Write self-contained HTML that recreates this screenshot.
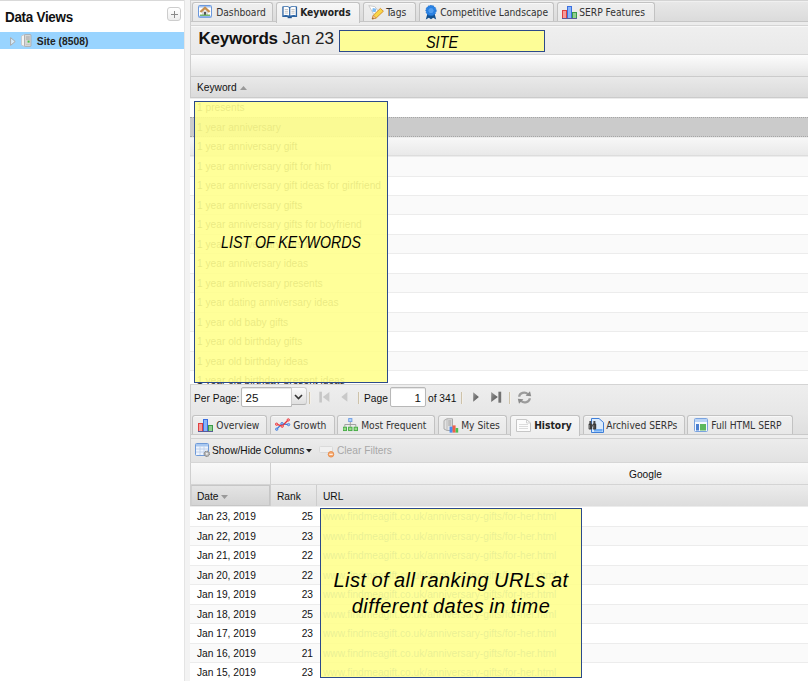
<!DOCTYPE html>
<html><head><meta charset="utf-8"><title>Keywords</title>
<style>
*{box-sizing:border-box;margin:0;padding:0}
html,body{width:808px;height:681px;overflow:hidden;background:#fff;font-family:"Liberation Sans",sans-serif;font-size:10.2px;color:#111}
div,span,svg{position:absolute}
#side{left:0;top:0;width:184px;height:681px;background:#fff;box-shadow:inset 0 1px 0 #d9d9d9}
#dv{left:5px;top:8px;font-size:14.6px;transform:scaleX(0.92);transform-origin:left center;font-weight:bold;letter-spacing:-0.3px;color:#111;line-height:18px;white-space:nowrap}
#plus{left:167px;top:7px;width:14px;height:14px;border:1px solid #cdcdcd;border-radius:3px;background:linear-gradient(#ffffff,#ededed)}
#plus:before{content:"";position:absolute;left:3px;top:6px;width:7px;height:1px;background:#8a8a8a}
#plus:after{content:"";position:absolute;left:6px;top:3px;width:1px;height:7px;background:#8a8a8a}
#selrow{left:0;top:32px;width:184px;height:17px;background:#99d4ff}
#selrow span{left:36.8px;top:2.7px;font-weight:bold;font-size:10.3px;line-height:13px;color:#222;white-space:nowrap}
#split{left:184px;top:0;width:6px;height:681px;background:#f3f3f3;border-left:1px solid #e4e4e4}
#main{left:190px;top:0;width:618px;height:681px;background:#fff}
.strip{left:190px;width:618px;background:linear-gradient(#e9e9e9,#dbdbdb);border-left:1px solid #cfcfcf}
.tab{height:19px;border:1px solid #c2c2c2;border-bottom:none;border-radius:3px 3px 0 0;background:linear-gradient(#efefef,#e8e8e8);box-shadow:inset 0 1px 0 #f8f8f8}
.tab.on{background:linear-gradient(#f6f6f6,#eeeeee);height:21px}
.tl{font-family:"DejaVu Sans Condensed","Liberation Sans",sans-serif;font-size:10.2px;line-height:13px;color:#333;white-space:nowrap}
.tl.b{font-weight:bold;color:#222}
.t{white-space:nowrap;line-height:13px}
.row{left:190px;width:618px;height:20px;border-top:1px solid #ececec}
.row.alt{background:#fafafa}
.ft{color:#222;white-space:nowrap;line-height:13px;font-size:10.2px}
.ybox{background:rgba(255,255,142,0.9);border:1px solid #2c4a8a}
.yt{font-style:italic;color:#000;white-space:nowrap;text-align:center}
.sep{width:2px;height:12px;background:linear-gradient(90deg,#cdc2aa 50%,#f3f0ea 50%);top:391.5px}
</style></head><body>
<div id="side"><div id="dv">Data Views</div><div id="plus"></div>
<div id="selrow"><svg style="left:10px;top:5px" width="6" height="9" viewBox="0 0 6 9"><path d="M0.6 0.6 L5.2 4.5 L0.6 8.4 Z" fill="#d6ecfc" stroke="#a9a9a9" stroke-width="1"/></svg>
<svg style="left:21px;top:2px" width="11" height="13" viewBox="0 0 11 13"><path d="M0.5 2 L3.5 0.5 V12.5 L0.5 11 Z" fill="#f4f4f4" stroke="#c4c4c4" stroke-width="0.8"/><rect x="3.5" y="0.5" width="6.5" height="12" rx="0.8" fill="#d6d6d6" stroke="#a8a8a8" stroke-width="0.8"/><path d="M5 3H8.8 M5 5H8.8" stroke="#999" stroke-width="0.8"/><rect x="6.6" y="6.6" width="2" height="2" fill="#48c048"/><path d="M5 10.5H8.8" stroke="#bbb" stroke-width="0.6"/></svg>
<span>Site (8508)</span></div></div>
<div id="split"></div><div id="main"></div>
<div class="strip" style="top:0;height:22px;border-bottom:1px solid #c6c6c6;box-shadow:inset 0 1px 0 #d4d4d4,inset 0 2px 0 #f0f0f0"></div>
<div style="left:190px;top:22px;width:618px;height:3px;background:#ececec;border-left:1px solid #cfcfcf"></div>
<div class="tab" style="left:192px;top:2px;width:81px"></div>
<span class="tl" style="left:216.2px;top:6px">Dashboard</span>
<svg style="left:198px;top:5px" width="14" height="13" viewBox="0 0 14 13"><rect x="0.5" y="0.5" width="13" height="12" rx="1" fill="#fff" stroke="#6b98dc"/><rect x="1" y="1" width="12" height="1.5" fill="#a5c3f0"/><rect x="1" y="10.7" width="12" height="1.8" fill="#8fb3ea"/><rect x="4" y="5.6" width="6" height="4.6" fill="#d8d8d8"/><path d="M2.4 7 L7 2.9 L11.6 7" fill="none" stroke="#c69050" stroke-width="2.3"/><rect x="6" y="7" width="2" height="3" fill="#555"/><rect x="2" y="9.6" width="10" height="1.2" fill="#5aaa4a"/></svg>
<div class="tab on" style="left:276px;top:2px;width:84px"></div>
<span class="tl b" style="left:300.2px;top:6px">Keywords</span>
<svg style="left:282px;top:5px" width="16" height="14" viewBox="0 0 16 14"><path d="M0.3 1.6 C2.5 0.6 5.5 0.6 7.7 2 C9.9 0.6 12.9 0.6 15.1 1.6 V12 H0.3 Z" fill="#2c64a4"/><path d="M1.6 2.2 C3.5 1.5 5.5 1.6 7.1 2.8 V10.6 C5.5 9.8 3.5 9.8 1.6 10.4 Z" fill="#fdfdfd"/><path d="M13.8 2.2 C11.9 1.5 9.9 1.6 8.3 2.8 V10.6 C9.9 9.8 11.9 9.8 13.8 10.4 Z" fill="#fdfdfd"/><path d="M2.8 4.5H6 M2.8 6.3H6 M2.8 8.1H6 M9.4 4.5H12.6 M9.4 6.3H12.6 M9.4 8.1H12.6" stroke="#b8b8b8" stroke-width="0.8"/><rect x="5.6" y="12" width="4.2" height="1.2" fill="#24568f"/></svg>
<div class="tab" style="left:363px;top:2px;width:53px"></div>
<span class="tl" style="left:386.2px;top:6px">Tags</span>
<svg style="left:368px;top:5px" width="16" height="15" viewBox="0 0 16 15"><path d="M0.8 0.6 L6.8 1.6 L11 7 L6 9.8 Z" fill="#ffffff" stroke="#cacaca"/><rect x="4.4" y="3.4" width="3.6" height="3.6" fill="#7fbcf4" transform="rotate(12 6.2 5.2)"/><path d="M4.2 14 L5.4 10.2 L12.4 3.4 L15.4 6.2 L8.2 13 Z" fill="#f8d648" stroke="#d8922e"/><path d="M4.2 14 L5.4 10.2 L8.2 13 Z" fill="#f3c9a0" stroke="#c8843c" stroke-width="0.6"/><path d="M4.2 14 L4.8 12.4 L5.8 13.4 Z" fill="#6a4a3a"/></svg>
<div class="tab" style="left:419px;top:2px;width:135px"></div>
<span class="tl" style="left:440.2px;top:6px">Competitive Landscape</span>
<svg style="left:424px;top:5px" width="14" height="15" viewBox="0 0 14 15"><path d="M3.6 8 L1.8 14.6 L4.8 12.8 L7 14.2 L9.2 12.8 L12.2 14.6 L10.4 8 Z" fill="#12508f"/><circle cx="7" cy="5.6" r="5.1" fill="#2a84e6" stroke="#1a6ed0" stroke-dasharray="1.6 0.9"/><circle cx="7" cy="5.6" r="3.1" fill="#4f9df0" stroke="#1f74d8" stroke-width="0.7"/></svg>
<div class="tab" style="left:557px;top:2px;width:98px"></div>
<span class="tl" style="left:579.2px;top:6px">SERP Features</span>
<svg style="left:562px;top:5px" width="16" height="14" viewBox="0 0 16 14"><rect x="0.5" y="5.5" width="4" height="8" fill="#f59a9a" stroke="#e04040"/><rect x="5.5" y="1.5" width="4" height="12" fill="#8ab4f8" stroke="#3a6fe0"/><rect x="10.5" y="7.5" width="4" height="6" fill="#8fd08f" stroke="#3a9a4a"/><path d="M0 13.5H15" stroke="#5a5a9a"/></svg>
<div style="left:190px;top:25px;width:618px;height:30px;background:linear-gradient(#efefef,#e9e9e9);border-left:1px solid #cfcfcf;border-top:1px solid #d4d4d4;border-bottom:1px solid #d4d4d4;box-shadow:inset 0 1px 0 #f8f8f8"></div>
<span class="t" style="left:198.5px;top:29px;font-size:17px;line-height:20px;font-weight:bold;letter-spacing:-0.25px;color:#111">Keywords</span>
<span class="t" style="left:282.5px;top:29px;font-size:17px;line-height:20px;color:#222;letter-spacing:0.1px">Jan 23</span>
<div class="ybox" style="left:339px;top:30px;width:206px;height:22px"></div>
<span class="yt" style="left:339px;top:33.5px;width:206px;font-size:16px;line-height:17px;transform:scaleX(0.9)">SITE</span>
<div style="left:190px;top:55px;width:618px;height:21px;background:linear-gradient(#fcfcfc,#f1f1f1 50%,#e5e5e5);border-left:1px solid #cfcfcf"></div>
<div style="left:190px;top:76px;width:618px;height:22px;background:linear-gradient(#e9e9e9,#dbdbdb);border:1px solid #cbcbcb;border-right:none"></div>
<span class="t" style="left:197px;top:81px;font-size:10.2px;color:#111">Keyword</span>
<svg style="left:240px;top:86px" width="7" height="4" viewBox="0 0 7 4"><path d="M0 4 L3.5 0 L7 4 Z" fill="#999"/></svg>
<div class="row" style="top:98px;height:19px;"></div>
<span class="ft" style="left:197px;top:101.0px">1 presents</span>
<div class="row" style="top:117px;height:20px;background:#cbcbcb;border-top:1px dotted #a6a6a6;border-bottom:1px dotted #a6a6a6;"></div>
<span class="ft" style="left:197px;top:120.5px">1 year anniversary</span>
<div class="row" style="top:137px;height:19px;background:linear-gradient(#f7f7f7,#e9e9e9);border-bottom:1px solid #dddddd;"></div>
<span class="ft" style="left:197px;top:140.0px">1 year anniversary gift</span>
<div class="row alt" style="top:156px;height:20px;"></div>
<span class="ft" style="left:197px;top:159.5px">1 year anniversary gift for him</span>
<div class="row" style="top:176px;height:19px;"></div>
<span class="ft" style="left:197px;top:179.0px">1 year anniversary gift ideas for girlfriend</span>
<div class="row alt" style="top:195px;height:19px;"></div>
<span class="ft" style="left:197px;top:198.5px">1 year anniversary gifts</span>
<div class="row" style="top:214px;height:20px;"></div>
<span class="ft" style="left:197px;top:218.0px">1 year anniversary gifts for boyfriend</span>
<div class="row alt" style="top:234px;height:19px;"></div>
<span class="ft" style="left:197px;top:237.5px">1 year anniversary gifts for her</span>
<div class="row" style="top:253px;height:20px;"></div>
<span class="ft" style="left:197px;top:257.0px">1 year anniversary ideas</span>
<div class="row alt" style="top:273px;height:19px;"></div>
<span class="ft" style="left:197px;top:276.5px">1 year anniversary presents</span>
<div class="row" style="top:292px;height:20px;"></div>
<span class="ft" style="left:197px;top:296.0px">1 year dating anniversary ideas</span>
<div class="row alt" style="top:312px;height:19px;"></div>
<span class="ft" style="left:197px;top:315.5px">1 year old baby gifts</span>
<div class="row" style="top:331px;height:20px;"></div>
<span class="ft" style="left:197px;top:335.0px">1 year old birthday gifts</span>
<div class="row alt" style="top:351px;height:19px;"></div>
<span class="ft" style="left:197px;top:354.5px">1 year old birthday ideas</span>
<div class="row" style="top:370px;height:19px;"></div>
<span class="ft" style="left:197px;top:374.0px">1 year old birthday present ideas</span>
<div class="ybox" style="left:194px;top:101px;width:194px;height:282px"></div>
<span class="yt" style="left:194px;top:234px;width:194px;font-size:16px;line-height:18px;transform:scaleX(0.885)">LIST OF KEYWORDS</span>
<div style="left:190px;top:384px;width:618px;height:29px;background:linear-gradient(#eeeeee,#e7e7e7);border-left:1px solid #cfcfcf;border-top:1px solid #d4d4d4"></div>
<span class="t" style="left:194px;top:392px;font-size:10.2px;color:#111">Per Page:</span>
<div style="left:241px;top:387px;width:51px;height:20px;background:#fff;border:1px solid #b8b8b8;border-radius:2px 0 0 2px;box-shadow:inset 0 1px 1px #e4e4e4"></div>
<span class="t" style="left:245.5px;top:390.5px;font-size:11.6px;color:#111">25</span>
<div style="left:291px;top:387px;width:16px;height:18px;background:linear-gradient(#fbfbfb,#dfdfdf);border:1px solid #cdcdcd;border-bottom-color:#b4b4b4;border-radius:0 3px 3px 0"></div>
<svg style="left:294px;top:394px" width="9" height="6" viewBox="0 0 9 6"><path d="M1 1 L4.5 4.5 L8 1" fill="none" stroke="#333" stroke-width="1.6"/></svg>
<div class="sep" style="left:309px"></div>
<div class="sep" style="left:358px"></div>
<div class="sep" style="left:461px"></div>
<div class="sep" style="left:509px"></div>
<svg style="left:319px;top:391px" width="11" height="12" viewBox="0 0 11 12"><rect x="0.3" y="0.7" width="2.6" height="10.8" fill="#c6c6c6"/><path d="M10.4 1 L3.8 6 L10.4 11 Z" fill="#c9c9c9"/></svg>
<svg style="left:341px;top:391px" width="7" height="12" viewBox="0 0 7 12"><path d="M6.4 1 L0.3 6 L6.4 10.8 Z" fill="#c9c9c9"/></svg>
<span class="t" style="left:364px;top:392px;font-size:10.2px;color:#111">Page</span>
<div style="left:390px;top:387px;width:36px;height:20px;background:#fff;border:1px solid #b8b8b8;border-radius:2px;box-shadow:inset 0 1px 1px #e4e4e4"></div>
<span class="t" style="left:390px;top:390.5px;width:31px;text-align:right;font-size:11.6px;color:#111">1</span>
<span class="t" style="left:428px;top:392px;font-size:10.2px;color:#111">of 341</span>
<svg style="left:473px;top:391px" width="7" height="12" viewBox="0 0 7 12"><defs><linearGradient id="ga" x1="0" y1="0" x2="1" y2="1"><stop offset="0" stop-color="#9a9a9a"/><stop offset="1" stop-color="#4a4a4a"/></linearGradient></defs><path d="M0.2 1.2 L5.9 6 L0.2 10.7 Z" fill="url(#ga)"/></svg>
<svg style="left:491px;top:391px" width="11" height="12" viewBox="0 0 11 12"><rect x="7.4" y="0.7" width="2.8" height="11" fill="#727272"/><path d="M0.2 1 L6.8 6 L0.2 11 Z" fill="url(#ga)"/></svg>
<svg style="left:517px;top:390px" width="15" height="15" viewBox="0 0 15 15"><path d="M2.2 6.8 A5 4.3 0 0 1 11 4.2" fill="none" stroke="#9c9c9c" stroke-width="2.2"/><path d="M8.6 5.8 L14.2 6.2 L13 1.2 Z" fill="#8c8c8c"/><path d="M12.8 8.2 A5 4.3 0 0 1 4 10.8" fill="none" stroke="#9c9c9c" stroke-width="2.2"/><path d="M6.4 9.2 L0.8 8.8 L2 13.8 Z" fill="#8c8c8c"/></svg>
<div class="strip" style="top:413px;height:22px;border-bottom:1px solid #c9c9c9;background:linear-gradient(#e7e7e7,#dfdfdf)"></div>
<div style="left:190px;top:435px;width:618px;height:3px;background:#eeeeee;border-left:1px solid #cfcfcf"></div>
<div class="tab" style="left:192px;top:415px;width:75px"></div>
<span class="tl" style="left:216.2px;top:419px">Overview</span>
<svg style="left:198px;top:418px" width="16" height="14" viewBox="0 0 16 14"><rect x="0.5" y="5.5" width="4" height="8" fill="#f59a9a" stroke="#e04040"/><rect x="5.5" y="1.5" width="4" height="12" fill="#8ab4f8" stroke="#3a6fe0"/><rect x="10.5" y="7.5" width="4" height="6" fill="#8fd08f" stroke="#3a9a4a"/><path d="M0 13.5H15" stroke="#5a5a9a"/></svg>
<div class="tab" style="left:270px;top:415px;width:65px"></div>
<span class="tl" style="left:293.2px;top:419px">Growth</span>
<svg style="left:275px;top:418px" width="16" height="14" viewBox="0 0 16 14"><path d="M1.5 11.2 L7 5.8 L13.8 6.6" fill="none" stroke="#3f78d8" stroke-width="1.2"/><path d="M1.2 6.2 L7.2 8 L13.4 1.8" fill="none" stroke="#e8323a" stroke-width="1.3"/><circle cx="1.7" cy="11.2" r="1.2" fill="#9dc0f4" stroke="#3f78d8" stroke-width="0.8"/><circle cx="7" cy="5.6" r="1.2" fill="#9dc0f4" stroke="#3f78d8" stroke-width="0.8"/><circle cx="13.6" cy="6.6" r="1.2" fill="#9dc0f4" stroke="#3f78d8" stroke-width="0.8"/><circle cx="1.6" cy="6.2" r="1.2" fill="#f8a0a0" stroke="#e8323a" stroke-width="0.8"/><circle cx="7.2" cy="8.2" r="1.2" fill="#f8a0a0" stroke="#e8323a" stroke-width="0.8"/><circle cx="13.3" cy="1.9" r="1.2" fill="#f8a0a0" stroke="#e8323a" stroke-width="0.8"/></svg>
<div class="tab" style="left:337px;top:415px;width:98px"></div>
<span class="tl" style="left:361.2px;top:419px">Most Frequent</span>
<svg style="left:343px;top:418px" width="16" height="14" viewBox="0 0 16 14"><rect x="5.7" y="0.6" width="3.2" height="3" fill="#b4d4fa" stroke="#6a9ae4" stroke-width="0.9"/><path d="M7.3 4 V6.5 M1.8 8.8 V6.5 H12.8 V8.8 M7.3 6.5 V8.8" fill="none" stroke="#9a9a9a" stroke-width="0.9"/><rect x="0.1" y="9.2" width="3.4" height="3.4" fill="#9adc8a" stroke="#3fa83f" stroke-width="0.9"/><rect x="5.6" y="9.2" width="3.4" height="3.4" fill="#9adc8a" stroke="#3fa83f" stroke-width="0.9"/><rect x="11.1" y="9.2" width="3.4" height="3.4" fill="#9adc8a" stroke="#3fa83f" stroke-width="0.9"/></svg>
<div class="tab" style="left:438px;top:415px;width:69px"></div>
<span class="tl" style="left:461.2px;top:419px">My Sites</span>
<svg style="left:443px;top:418px" width="16" height="15" viewBox="0 0 16 15"><path d="M1 2.5 L4 0.8 H9.5 V12.5 H4 L1 11 Z" fill="#e2e2e2" stroke="#aaa"/><path d="M4 0.8 V12.5" stroke="#bbb"/><path d="M5.2 3H8.4 M5.2 5H8.4 M5.2 7H8.4" stroke="#999"/><rect x="6.6" y="8.6" width="3" height="6" fill="#4a8af0"/><rect x="9.6" y="7.4" width="3" height="7.2" fill="#f0604a"/><rect x="12.6" y="10" width="2.6" height="4.6" fill="#4cc050"/></svg>
<div class="tab on" style="left:510px;top:415px;width:70px"></div>
<span class="tl b" style="left:534.2px;top:419px">History</span>
<svg style="left:516px;top:418px" width="15" height="14" viewBox="0 0 15 14"><path d="M0.5 1.5 H10.5 L14.5 5 V13.5 H0.5 Z" fill="#fcfcfc" stroke="#c6c6c6"/><path d="M10.5 1.5 V5 H14.5" fill="none" stroke="#d2d2d2"/><path d="M3 6.5H12 M3 8.5H12 M3 10.5H12" stroke="#dcdcdc"/></svg>
<div class="tab" style="left:583px;top:415px;width:102px"></div>
<span class="tl" style="left:606.2px;top:419px">Archived SERPs</span>
<svg style="left:588px;top:418px" width="16" height="15" viewBox="0 0 16 15"><path d="M3.5 0.5 H11 L15.5 4.5 V14.5 H3.5 Z" fill="#dcebfb" stroke="#3f7fd8"/><rect x="6" y="11" width="8.5" height="2.6" fill="#72aef4"/><rect x="0.6" y="5.6" width="3.4" height="6" rx="0.8" fill="#3a3a3a"/><rect x="4.8" y="5.6" width="3.4" height="6" rx="0.8" fill="#3a3a3a"/><rect x="1.4" y="3" width="2" height="3" fill="#4a4a4a"/><rect x="5.4" y="3" width="2" height="3" fill="#4a4a4a"/><rect x="3.6" y="6.5" width="1.6" height="2" fill="#555"/><path d="M1.6 7V10.5 M5.8 7V10.5" stroke="#9a9a9a" stroke-width="0.7"/></svg>
<div class="tab" style="left:687px;top:415px;width:106px"></div>
<span class="tl" style="left:711.2px;top:419px">Full HTML SERP</span>
<svg style="left:694px;top:418px" width="14" height="14" viewBox="0 0 14 14"><rect x="0.5" y="0.5" width="13" height="13" rx="1" fill="#f4f8fe" stroke="#7aa3df"/><rect x="1" y="1" width="12" height="3" fill="#b9d3f5"/><rect x="2" y="6" width="3" height="6.5" fill="#4a7fd0"/><rect x="6" y="6" width="6" height="6.5" fill="#5cb85c"/></svg>
<div style="left:190px;top:438px;width:618px;height:25px;background:linear-gradient(#ececec,#e2e2e2);border-top:1px solid #d2d2d2;border-left:1px solid #cfcfcf;border-bottom:1px solid #d6d6d6"></div>
<svg style="left:195px;top:443px" width="16" height="15" viewBox="0 0 16 15"><rect x="0.5" y="0.5" width="13" height="12" rx="1" fill="#eef4fd" stroke="#6f9ad8"/><rect x="1" y="1" width="12" height="2.5" fill="#a9c8f0"/><path d="M1 6H13 M1 9H13 M5 3.5V12 M9 3.5V12" stroke="#b8cbe8" stroke-width="0.8"/><circle cx="11.8" cy="10.8" r="2.7" fill="#b4b4b4" stroke="#777" stroke-dasharray="1.3 0.8"/><circle cx="11.8" cy="10.8" r="1" fill="#f0f0f0"/></svg>
<span class="t" style="left:212px;top:444px;font-size:10.2px;color:#111">Show/Hide Columns</span>
<svg style="left:306px;top:449px" width="6" height="4" viewBox="0 0 6 4"><path d="M0 0 H6 L3 3.5 Z" fill="#222"/></svg>
<svg style="left:319px;top:445px" width="17" height="13" viewBox="0 0 17 13"><rect x="0.5" y="1.5" width="13" height="6" rx="1" fill="#f0f0f0" stroke="#dadada"/><circle cx="12" cy="9.3" r="2.8" fill="#f3a870" stroke="#e8853c" stroke-width="0.8"/><rect x="10.3" y="8.8" width="3.4" height="1" fill="#fff"/></svg>
<span class="t" style="left:337px;top:444px;font-size:10.2px;color:#a8a8a8">Clear Filters</span>
<div style="left:190px;top:463px;width:618px;height:22px;background:linear-gradient(#f9f9f9,#ececec);border-left:1px solid #cfcfcf;border-bottom:1px solid #d4d4d4"></div>
<div style="left:270px;top:463px;width:1px;height:22px;background:#d0d0d0"></div>
<span class="t" style="left:629px;top:468px;font-size:10.2px;color:#111">Google</span>
<div style="left:190px;top:485px;width:618px;height:22px;background:linear-gradient(#ececec,#dddddd);border-left:1px solid #cfcfcf;border-bottom:1px solid #cfcfcf"></div>
<div style="left:191px;top:485px;width:79px;height:21px;background:linear-gradient(#e4e4e4,#d4d4d4);border:1px solid #c6c6c6;border-left-color:#d0d0d0"></div>
<div style="left:270px;top:485px;width:1px;height:21px;background:#cdcdcd"></div>
<div style="left:316px;top:485px;width:1px;height:21px;background:#cdcdcd"></div>
<span class="t" style="left:197px;top:490px;font-size:10.2px;color:#111">Date</span>
<svg style="left:221px;top:495px" width="7" height="4" viewBox="0 0 7 4"><path d="M0 0 H7 L3.5 4 Z" fill="#999"/></svg>
<span class="t" style="left:277px;top:490px;font-size:10.2px;color:#111">Rank</span>
<span class="t" style="left:323px;top:490px;font-size:10.2px;color:#111">URL</span>
<div class="row" style="top:506px;height:20px"></div>
<span class="t" style="left:197px;top:510.0px;font-size:10.2px;color:#111">Jan 23, 2019</span>
<span class="t" style="left:280px;width:33px;text-align:right;top:510.0px;font-size:10.2px;color:#111">25</span>
<span class="ft" style="left:323px;top:510.0px;color:#2060d0">www.findmeagift.co.uk/anniversary-gifts/for-her.html</span>
<div class="row alt" style="top:526px;height:19px"></div>
<span class="t" style="left:197px;top:529.5px;font-size:10.2px;color:#111">Jan 22, 2019</span>
<span class="t" style="left:280px;width:33px;text-align:right;top:529.5px;font-size:10.2px;color:#111">23</span>
<span class="ft" style="left:323px;top:529.5px;color:#2060d0">www.findmeagift.co.uk/anniversary-gifts/for-her.html</span>
<div class="row" style="top:545px;height:20px"></div>
<span class="t" style="left:197px;top:549.0px;font-size:10.2px;color:#111">Jan 21, 2019</span>
<span class="t" style="left:280px;width:33px;text-align:right;top:549.0px;font-size:10.2px;color:#111">22</span>
<span class="ft" style="left:323px;top:549.0px;color:#2060d0">www.findmeagift.co.uk/anniversary-gifts/for-her.html</span>
<div class="row alt" style="top:565px;height:19px"></div>
<span class="t" style="left:197px;top:568.5px;font-size:10.2px;color:#111">Jan 20, 2019</span>
<span class="t" style="left:280px;width:33px;text-align:right;top:568.5px;font-size:10.2px;color:#111">22</span>
<span class="ft" style="left:323px;top:568.5px;color:#2060d0">www.findmeagift.co.uk/anniversary-gifts/for-her.html</span>
<div class="row" style="top:584px;height:20px"></div>
<span class="t" style="left:197px;top:588.0px;font-size:10.2px;color:#111">Jan 19, 2019</span>
<span class="t" style="left:280px;width:33px;text-align:right;top:588.0px;font-size:10.2px;color:#111">23</span>
<span class="ft" style="left:323px;top:588.0px;color:#2060d0">www.findmeagift.co.uk/anniversary-gifts/for-her.html</span>
<div class="row alt" style="top:604px;height:19px"></div>
<span class="t" style="left:197px;top:607.5px;font-size:10.2px;color:#111">Jan 18, 2019</span>
<span class="t" style="left:280px;width:33px;text-align:right;top:607.5px;font-size:10.2px;color:#111">25</span>
<span class="ft" style="left:323px;top:607.5px;color:#2060d0">www.findmeagift.co.uk/anniversary-gifts/for-her.html</span>
<div class="row" style="top:623px;height:20px"></div>
<span class="t" style="left:197px;top:627.0px;font-size:10.2px;color:#111">Jan 17, 2019</span>
<span class="t" style="left:280px;width:33px;text-align:right;top:627.0px;font-size:10.2px;color:#111">23</span>
<span class="ft" style="left:323px;top:627.0px;color:#2060d0">www.findmeagift.co.uk/anniversary-gifts/for-her.html</span>
<div class="row alt" style="top:643px;height:19px"></div>
<span class="t" style="left:197px;top:646.5px;font-size:10.2px;color:#111">Jan 16, 2019</span>
<span class="t" style="left:280px;width:33px;text-align:right;top:646.5px;font-size:10.2px;color:#111">21</span>
<span class="ft" style="left:323px;top:646.5px;color:#2060d0">www.findmeagift.co.uk/anniversary-gifts/for-her.html</span>
<div class="row" style="top:662px;height:20px"></div>
<span class="t" style="left:197px;top:666.0px;font-size:10.2px;color:#111">Jan 15, 2019</span>
<span class="t" style="left:280px;width:33px;text-align:right;top:666.0px;font-size:10.2px;color:#111">23</span>
<span class="ft" style="left:323px;top:666.0px;color:#2060d0">www.findmeagift.co.uk/anniversary-gifts/for-her.html</span>
<div class="ybox" style="left:320px;top:508px;width:262px;height:170px"></div>
<span class="yt" style="left:320px;top:567px;width:262px;font-size:20px;line-height:26px;letter-spacing:0.45px;word-spacing:-1px;white-space:normal">List of all ranking URLs at different dates in time</span>
</body></html>
